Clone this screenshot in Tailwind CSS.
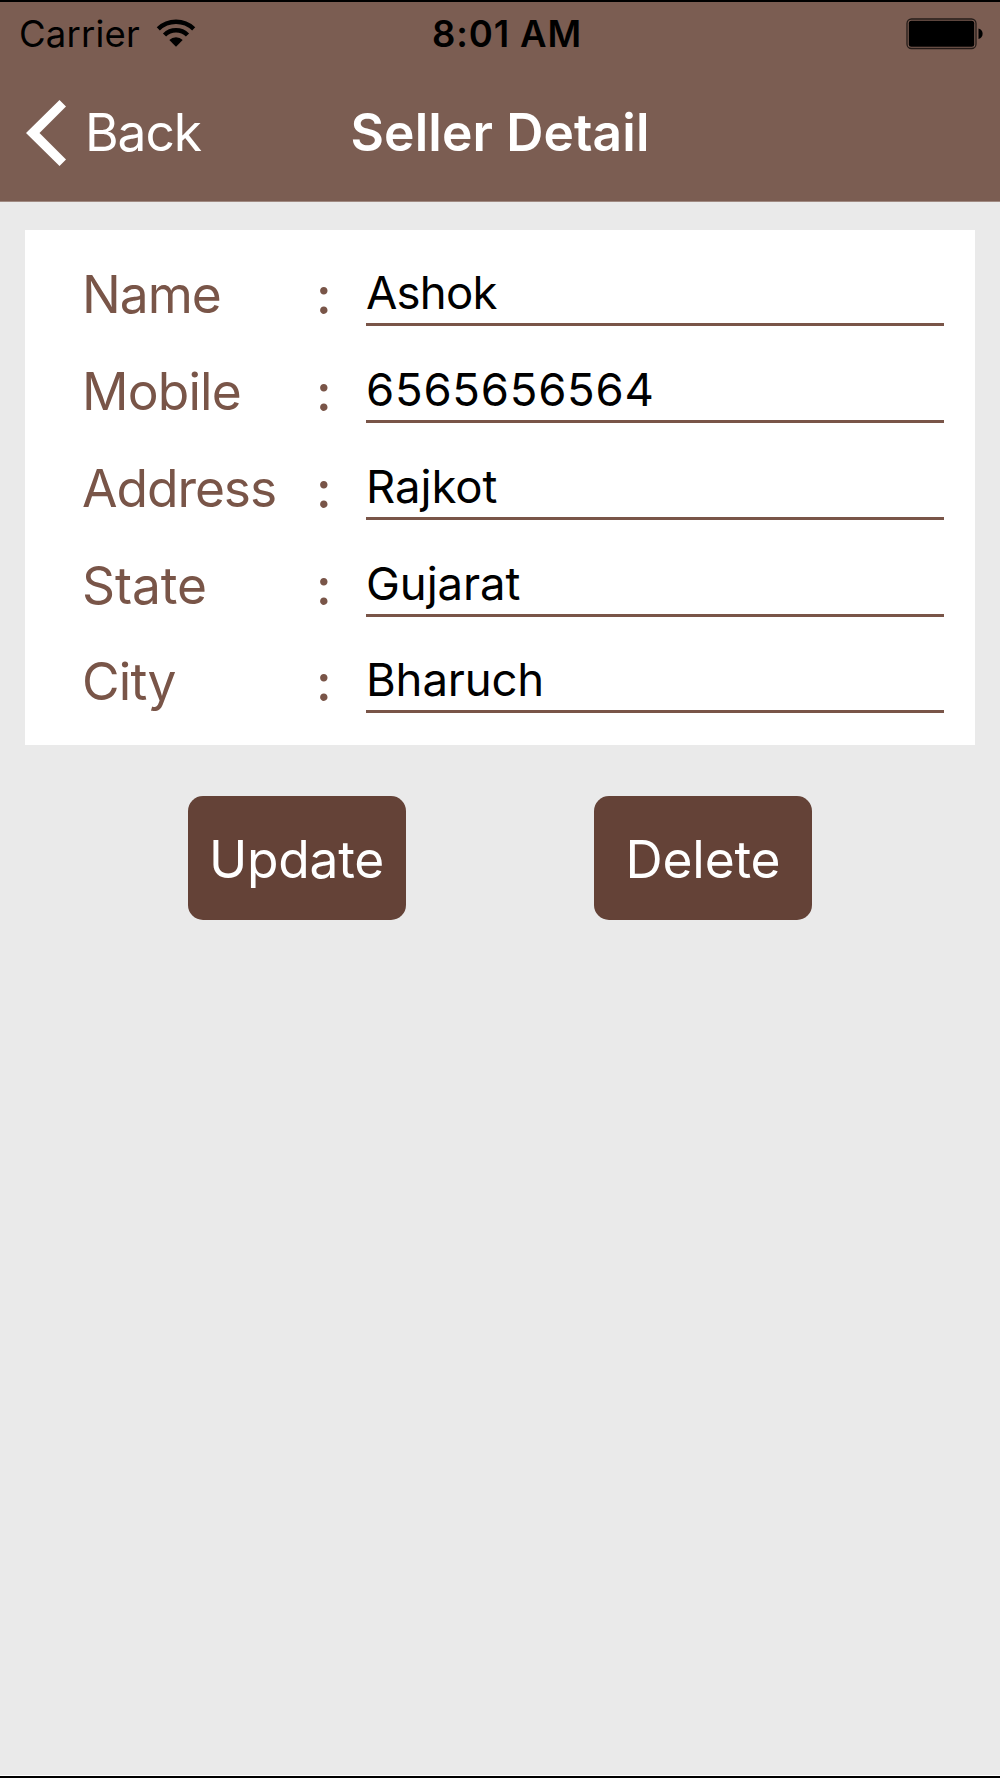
<!DOCTYPE html>
<html lang="en">
<head>
    <meta charset="UTF-8">
    <meta name="viewport" content="width=device-width, initial-scale=1.0">
    <title>Seller Detail</title>
    <script src="https://cdn.jsdelivr.net/npm/@tailwindcss/browser@4"></script>
</head>
<body class="flex flex-col h-[1778px] bg-[#eaeaea] border-t-2 border-b-2 border-black font-['Inter','Liberation_Sans',sans-serif] overflow-hidden">
    <header class="h-[200px] shrink-0 bg-[#7b5d52] border-b border-[#a08a82]">
        <!-- Status bar -->
        <div class="grid grid-cols-3 items-center h-[64px] pl-[19px] pr-[17px] text-[36.5px] leading-none text-black">
            <div class="flex items-center gap-[16px]">
                <span class="tracking-[0.18px]">Carrier</span>
                <svg class="w-[40px] h-[30px] mb-[3px]" viewBox="0 0 40 30" fill="none" stroke="#000">
                    <path d="M2.3 10.8a25.7 25.7 0 0 1 35.4 0" stroke-width="4.5"/>
                    <path d="M8.5 17a16.3 16.3 0 0 1 23 0" stroke-width="4.5"/>
                    <path d="M20 28.7L13.3 22a9.5 9.5 0 0 1 13.4 0z" fill="#000" stroke="none"/>
                </svg>
            </div>
            <span class="text-center font-semibold tracking-[0.9px] pl-[12px] pt-px">8:01 AM</span>
            <div class="flex justify-end">
                <svg class="w-[77px] h-[32px]" viewBox="0 0 77 32">
                    <rect x="1" y="1" width="69" height="29.5" rx="4.5" fill="none" stroke="#000" stroke-opacity=".7" stroke-width="1.3"/>
                    <rect x="2.8" y="2.8" width="65.4" height="25.9" rx="2.5" fill="#000"/>
                    <path d="M72.5 10.5c5.5 1 5.5 9.5 0 10.5z" fill="#000"/>
                </svg>
            </div>
        </div>
        <!-- Navigation bar -->
        <div class="grid grid-cols-[300px_400px_300px] items-center h-[134px] text-[51.5px] leading-none text-white">
            <div class="flex items-center pl-[26px] gap-[18px]">
                <svg class="w-[41px] h-[66px]" viewBox="0 0 41 66" fill="#fff">
                    <path d="M0 33L33.5 0l6.5 6.5L13.5 33 40 59.5 33.5 66z"/>
                </svg>
                <span class="tracking-[-1.1px]">Back</span>
            </div>
            <h1 class="text-center font-semibold tracking-[0.13px]">Seller Detail</h1>
        </div>
    </header>

    <main class="flex-1 px-[25px] pt-[27.5px] border-b border-white">
        <div class="h-[515.5px] bg-white pt-[16.5px] pl-[57px] pr-[31.5px] text-[#795548] text-[51.5px] leading-none">
            <div class="grid grid-cols-[234px_50px_1fr] h-[96.85px]">
                <span class="leading-[97px] tracking-[-1px]">Name</span>
                <span class="leading-[99px] font-medium">:</span>
                <div class="mt-[15px] h-[62px] box-content border-b-3 border-[#795548] text-black text-[45.5px] leading-[64px] tracking-[-0.8px]">Ashok</div>
            </div>
            <div class="grid grid-cols-[234px_50px_1fr] h-[96.85px]">
                <span class="leading-[97px] tracking-[-0.85px]">Mobile</span>
                <span class="leading-[99px] font-medium">:</span>
                <div class="mt-[15px] h-[62px] box-content border-b-3 border-[#795548] text-black text-[45.5px] leading-[64px] tracking-[0.75px]">6565656564</div>
            </div>
            <div class="grid grid-cols-[234px_50px_1fr] h-[96.85px]">
                <span class="leading-[97px] tracking-[-1.06px]">Address</span>
                <span class="leading-[99px] font-medium">:</span>
                <div class="mt-[15px] h-[62px] box-content border-b-3 border-[#795548] text-black text-[45.5px] leading-[64px] tracking-[-0.07px]">Rajkot</div>
            </div>
            <div class="grid grid-cols-[234px_50px_1fr] h-[96.85px]">
                <span class="leading-[97px] tracking-[-0.1px]">State</span>
                <span class="leading-[99px] font-medium">:</span>
                <div class="mt-[15px] h-[62px] box-content border-b-3 border-[#795548] text-black text-[45.5px] leading-[64px] tracking-[-0.1px]">Gujarat</div>
            </div>
            <div class="grid grid-cols-[234px_50px_1fr] h-[96.85px]">
                <span class="leading-[97px] tracking-[-0.82px]">City</span>
                <span class="leading-[99px] font-medium">:</span>
                <div class="mt-[15px] h-[62px] box-content border-b-3 border-[#795548] text-black text-[45.5px] leading-[64px] tracking-[-0.15px]">Bharuch</div>
            </div>
        </div>

        <div class="flex justify-center gap-[187.5px] mt-[50.5px] text-white text-[51.5px]">
            <button class="w-[218.5px] h-[124.5px] rounded-[15px] bg-[#644237] pt-[3px] pr-px leading-none tracking-[-0.3px]">Update</button>
            <button class="w-[218.5px] h-[124.5px] rounded-[15px] bg-[#644237] pt-[3px] leading-none tracking-[-0.21px]">Delete</button>
        </div>
    </main>
</body>
</html>
